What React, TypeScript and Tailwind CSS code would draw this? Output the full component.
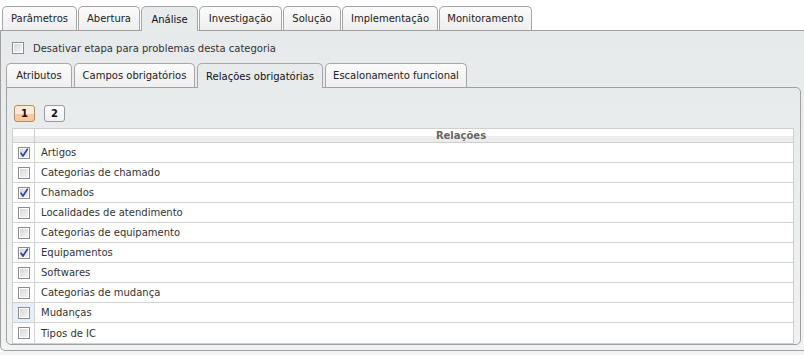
import React from "react";

const topTabs = [
  { label: "Parâmetros", w: "w-[75px]" },
  { label: "Abertura", w: "w-[62px]" },
  { label: "Análise", w: "w-[57px]", active: true },
  { label: "Investigação", w: "w-[83px]" },
  { label: "Solução", w: "w-[58px]" },
  { label: "Implementação", w: "w-[96px]" },
  { label: "Monitoramento", w: "w-[93px]" },
];

const innerTabs = [
  { label: "Atributos", w: "w-[66px]" },
  { label: "Campos obrigatórios", w: "w-[121px]" },
  { label: "Relações obrigatórias", w: "w-[126px]", active: true },
  { label: "Escalonamento funcional", w: "w-[142px]" },
];

const rows = [
  { label: "Artigos", checked: true },
  { label: "Categorias de chamado" },
  { label: "Chamados", checked: true },
  { label: "Localidades de atendimento" },
  { label: "Categorias de equipamento" },
  { label: "Equipamentos", checked: true },
  { label: "Softwares" },
  { label: "Categorias de mudança" },
  { label: "Mudanças", hover: true },
  { label: "Tipos de IC" },
];

function Check({ checked }: { checked?: boolean }) {
  return (
    <span className="relative block w-[12px] h-[12px] border border-[#8c8c8c] bg-gradient-to-br from-[#d4d4d4] to-[#f8f8f8] shadow-[inset_0_0_0_1px_#ffffff]">
      {checked && (
        <svg viewBox="0 0 12 12" className="absolute -left-px -top-px w-[12px] h-[12px]">
          <path d="M3 6.2 L5 9 L9.4 2.2" fill="none" stroke="#2a48a8" strokeWidth="1.7" strokeLinecap="round" strokeLinejoin="round" />
        </svg>
      )}
    </span>
  );
}

function Tab({ label, w, active }: { label: string; w: string; active?: boolean }) {
  return (
    <div
      className={
        active
          ? `${w} h-[25px] -mb-px flex items-center justify-center rounded-t-[5px] border border-b-0 border-[#a6a6a6] bg-[#e8ebec] text-[#111]`
          : `${w} h-[24px] flex items-center justify-center rounded-t-[5px] border border-b-0 border-[#a6a6a6] bg-gradient-to-b from-[#fbfbfb] to-[#efefef] text-[#222]`
      }
    >
      {label}
    </div>
  );
}

export default function App() {
  return (
    <div
      className="w-[804px] h-[355px] overflow-hidden bg-white text-[10px]"
      style={{ fontFamily: '"DejaVu Sans", Verdana, sans-serif' }}
    >
      {/* Top tabs */}
      <div className="flex items-end gap-[1px] pl-[2px] pt-[6px]">
        {topTabs.map((t) => (
          <Tab key={t.label} {...t} />
        ))}
      </div>

      {/* Outer panel */}
      <div className="w-[808px] border border-r-0 border-[#a0a0a0] rounded-bl-[5px] bg-gradient-to-b from-[#e7eaeb] to-[#f1f2f3] pt-[11px] pl-[5px] pr-[7px] pb-[5px]">
        <div className="flex items-center gap-[9px] ml-[6px] h-[12px]">
          <Check />
          <span className="text-[#333]">Desativar etapa para problemas desta categoria</span>
        </div>

        {/* Inner tabs */}
        <div className="flex items-end gap-[2px] mt-[9px]">
          {innerTabs.map((t) => (
            <Tab key={t.label} {...t} />
          ))}
        </div>

        {/* Inner panel */}
        <div className="border border-[#a0a0a0] rounded-tr-[5px] rounded-b-[5px] bg-gradient-to-b from-[#e8ebec] to-[#eff1f2] pt-[17px] pl-[5px] pr-[6px]">
          <div className="flex gap-[9px] ml-[2px]">
            <div className="w-[21px] h-[17px] flex items-center justify-center rounded-[3px] border border-[#b08c6c] bg-gradient-to-b from-[#fdeadb] from-50% to-[#f9c89c] to-50% font-bold text-[#111]">
              1
            </div>
            <div className="w-[21px] h-[17px] flex items-center justify-center rounded-[3px] border border-[#9a9a9a] bg-gradient-to-b from-white to-[#f0f0f0] font-bold text-[#111]">
              2
            </div>
          </div>

          <div className="mt-[6px] bg-white border border-[#cfcfcf]">
            <div className="flex h-[14px] border-b border-[#cfcfcf] bg-gradient-to-b from-white from-50% to-[#ececec] to-50%">
              <div className="w-[22px] border-r border-[#cfcfcf]" />
              <div className="flex-1 flex items-center justify-center pl-[94px] font-bold text-[#666] leading-none">
                Relações
              </div>
            </div>
            {rows.map((r, i) => (
              <div
                key={r.label}
                className={`flex h-[20px] ${i < rows.length - 1 ? "border-b border-[#d2d2d2]" : ""}`}
              >
                <div
                  className={`w-[22px] flex items-center justify-center border-r border-[#d2d2d2] ${r.hover ? "bg-[#e6eef8]" : ""}`}
                >
                  <Check checked={r.checked} />
                </div>
                <div className="flex-1 flex items-center pl-[6px] text-[#333]">{r.label}</div>
              </div>
            ))}
          </div>
        </div>
      </div>
      <div className="h-[6px] bg-[#f4f4f4]" />
    </div>
  );
}
